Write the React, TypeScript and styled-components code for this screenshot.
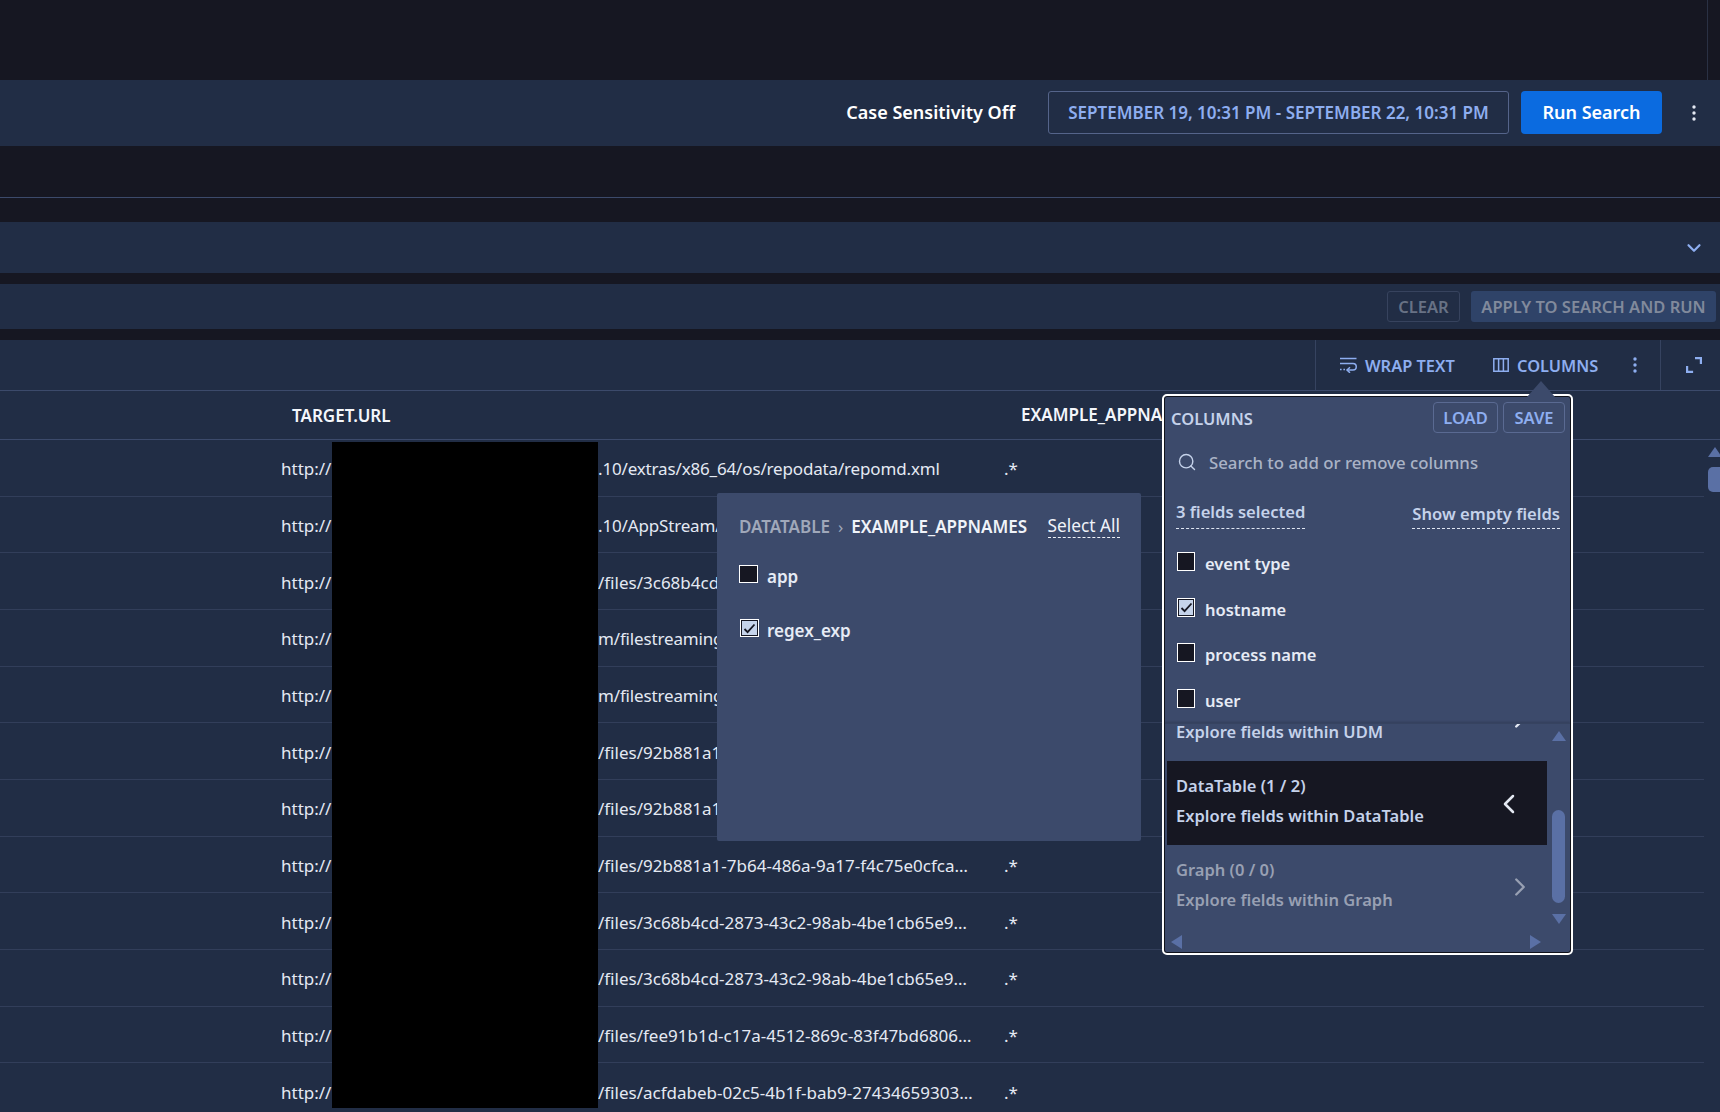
import React from "react";
import styled, { createGlobalStyle } from "styled-components";
import { ChevronDown, ChevronLeft, ChevronRight, Search } from "lucide-react";

const GlobalStyle = createGlobalStyle`
  html, body { margin: 0; padding: 0; background: #161722; }
  body { font-family: "Noto Sans", "Open Sans", sans-serif; overflow: hidden; }
  * { box-sizing: border-box; }
`;

const Page = styled.div`
  position: relative;
  width: 1720px;
  height: 1112px;
  overflow: hidden;
  background: #161722;
  color: #e4e9f3;
`;

const TopBand = styled.div`
  height: 80px;
  display: flex;
  justify-content: flex-end;
  padding-right: 12px;
`;
const ScrollEdge = styled.div`
  width: 1px;
  background: #2a3144;
`;

const Bar = styled.div<{ $h: number; $mt?: number; $pr?: number; $pb?: number }>`
  height: ${(p) => p.$h}px;
  margin-top: ${(p) => p.$mt ?? 0}px;
  padding-right: ${(p) => p.$pr ?? 16}px;
  padding-bottom: ${(p) => p.$pb ?? 0}px;
  background: #212d45;
  display: flex;
  align-items: center;
  justify-content: flex-end;
`;

const CaseLabel = styled.span`
  font-size: 18px;
  font-weight: 600;
  color: #fff;
  margin-right: 33px;
  padding-bottom: 1px;
  white-space: nowrap;
`;
const DateBox = styled.div`
  width: 461px;
  height: 43px;
  padding-bottom: 1px;
  border: 1px solid #55648a;
  border-radius: 3px;
  color: #8eaef0;
  font-size: 17px;
  font-weight: 600;
  display: flex;
  align-items: center;
  justify-content: center;
  white-space: nowrap;
`;
const RunButton = styled.button`
  width: 141px;
  height: 43px;
  margin: 0 22px 0 12px;
  padding: 0 0 1px;
  border: 0;
  border-radius: 4px;
  background: #0b6be0;
  color: #fff;
  font: 600 18px "Noto Sans", sans-serif;
`;
const IconBox = styled.span<{ $c?: string }>`
  width: 20px;
  height: 20px;
  display: inline-flex;
  align-items: center;
  justify-content: center;
  flex: none;
  color: ${(p) => p.$c ?? "#8eaef0"};
  & > svg { flex: none; }
`;

const Rule = styled.div`
  height: 1px;
  margin-top: 51px;
  background: #3c4a6b;
`;

const ClearButton = styled.button`
  width: 73px;
  height: 31px;
  border: 1px solid #37435e;
  border-radius: 3px;
  background: transparent;
  color: #687285;
  font: 600 16.5px "Noto Sans", sans-serif;
  padding: 0;
`;
const ApplyButton = styled.button`
  width: 245px;
  height: 31px;
  margin-left: 11px;
  border: 0;
  border-radius: 3px;
  background: #2f4368;
  color: #818a9c;
  font: 600 16.5px "Noto Sans", sans-serif;
  padding: 0;
  white-space: nowrap;
`;

const TableToolbar = styled.div`
  height: 51px;
  margin-top: 11px;
  background: #212d45;
  border-bottom: 1px solid #3c4a6b;
  display: flex;
  justify-content: flex-end;
`;
const ToolGroup = styled.div`
  width: 346px;
  padding-left: 24px;
  border-left: 1px solid #364360;
  border-right: 1px solid #364360;
  display: flex;
  align-items: center;
`;
const ToolButton = styled.div<{ $w: number }>`
  width: ${(p) => p.$w}px;
  display: flex;
  align-items: center;
  gap: 8px;
  color: #8eaef0;
  font-size: 16.4px;
  font-weight: 600;
  white-space: nowrap;
`;
const ExpandCell = styled.div`
  width: 59px;
  padding-left: 25px;
  display: flex;
  align-items: center;
`;

const Table = styled.div`
  background: #212d45;
  height: 722px;
  overflow: hidden;
`;
const HeaderRow = styled.div`
  height: 49px;
  border-bottom: 1px solid #3c4a6b;
  display: grid;
  grid-template-columns: 1021px 141px;
  align-items: center;
  font-size: 17px;
  font-weight: 600;
  color: #f4f6fb;
  white-space: nowrap;
`;
const HeaderCell = styled.div<{ $pl?: number; $mt?: number }>`
  padding-left: ${(p) => p.$pl ?? 0}px;
  margin-top: ${(p) => p.$mt ?? 0}px;
`;
const TableBody = styled.div`
  display: flex;
`;
const Rows = styled.div`
  width: 1704px;
`;
const Row = styled.div`
  height: 56.66px;
  padding-top: 2px;
  border-bottom: 1px solid #323e5a;
  display: grid;
  grid-template-columns: 1004px 1fr;
  align-items: center;
  font-size: 17px;
  color: #e4e9f3;
  white-space: nowrap;
`;
const UrlCell = styled.div`
  padding-left: 281px;
  display: flex;
  overflow: hidden;
`;
const Scheme = styled.span`
  width: 317px;
  flex: none;
`;
const Path = styled.span<{ $tight?: boolean }>`
  letter-spacing: ${(p) => (p.$tight ? "-0.16px" : "0")};
`;
const VScroll = styled.div`
  width: 16px;
  padding: 7px 0 0 4px;
  display: flex;
  flex-direction: column;
`;
const VThumb = styled.div`
  width: 12px;
  height: 25px;
  margin-top: 10px;
  border-radius: 5px 0 0 5px;
  background: #5a70a5;
`;
const Arrow = styled.span<{ $dir: "up" | "down" | "left" | "right"; $w: number; $h: number }>`
  display: block;
  flex: none;
  width: 0;
  height: 0;
  ${(p) =>
    p.$dir === "up"
      ? `border-left:${p.$w / 2}px solid transparent;border-right:${p.$w / 2}px solid transparent;border-bottom:${p.$h}px solid #5a70a5;`
      : p.$dir === "down"
      ? `border-left:${p.$w / 2}px solid transparent;border-right:${p.$w / 2}px solid transparent;border-top:${p.$h}px solid #5a70a5;`
      : p.$dir === "left"
      ? `border-top:${p.$h / 2}px solid transparent;border-bottom:${p.$h / 2}px solid transparent;border-right:${p.$w}px solid #5a70a5;`
      : `border-top:${p.$h / 2}px solid transparent;border-bottom:${p.$h / 2}px solid transparent;border-left:${p.$w}px solid #5a70a5;`}
`;

const Redaction = styled.div`
  position: absolute;
  left: 332px;
  top: 442px;
  width: 266px;
  height: 666px;
  background: #000;
`;

const TablePopover = styled.div`
  position: absolute;
  left: 717px;
  top: 493px;
  width: 424px;
  height: 348px;
  padding: 22px 21px 0 22px;
  background: #3c4a6b;
  border-radius: 2px;
`;
const CrumbRow = styled.div`
  display: flex;
  align-items: center;
  height: 22px;
  font-size: 17px;
  white-space: nowrap;
`;
const CrumbMuted = styled.span`
  color: #a0a8ba;
  font-weight: 600;
`;
const CrumbSep = styled.span`
  color: #a0a8ba;
  margin: 0 8px;
`;
const CrumbStrong = styled.span`
  color: #f0f3f9;
  font-weight: 600;
`;
const SelectAll = styled.span`
  margin-left: auto;
  color: #f0f3f9;
  border-bottom: 1px dashed #f0f3f9;
  line-height: 22px;
  font-size: 17.3px;
`;
const OptionList = styled.div`
  margin-top: 28px;
  display: flex;
  flex-direction: column;
  gap: 36px;
`;
const Option = styled.div<{ $nudge?: number }>`
  display: flex;
  height: 18px;
  gap: 9px;
  padding-left: ${(p) => p.$nudge ?? 0}px;
`;
const OptionLabel = styled.span<{ $shift?: number }>`
  margin-left: ${(p) => p.$shift ?? 0}px;
  font-size: 16.5px;
  font-weight: 600;
  line-height: 26px;
  color: #e6ebf5;
`;
const PopoverLabel = styled(OptionLabel)`
  font-size: 17px;
  line-height: 24px;
`;
const Check = styled.span<{ $on?: boolean; $w?: number; $h?: number }>`
  width: ${(p) => p.$w ?? 18}px;
  height: ${(p) => p.$h ?? 19}px;
  flex: none;
  border: 1px solid #fff;
  background: ${(p) => (p.$on ? "#c5d3ea" : "#161722")};
  box-shadow: ${(p) => (p.$on ? "inset 0 0 0 1px #161722" : "none")};
  display: inline-flex;
  align-items: center;
  justify-content: center;
`;

const ColumnsPanel = styled.div`
  position: absolute;
  left: 1162px;
  top: 394px;
  width: 411px;
  height: 561px;
  padding: 1px;
  border: 2px solid #fff;
  border-radius: 5px;
  background: #3c4a6b;
  box-shadow: inset 0 0 0 1px #10121a;
`;
const PanelCaret = styled.span`
  position: absolute;
  left: 363px;
  top: -15px;
  width: 0;
  height: 0;
  border-left: 14px solid transparent;
  border-right: 14px solid transparent;
  border-bottom: 16px solid #3c4a6b;
`;
const PanelHeader = styled.div`
  height: 40px;
  padding: 5px 5px 0 6px;
  display: flex;
  align-items: flex-start;
  gap: 5px;
`;
const PanelTitle = styled.span`
  margin-right: auto;
  font-size: 16.5px;
  font-weight: 600;
  line-height: 34px;
  color: #c5d2ea;
`;
const GhostButton = styled.button<{ $w: number }>`
  width: ${(p) => p.$w}px;
  height: 31px;
  padding: 0;
  border: 1px solid #5a6a92;
  border-radius: 4px;
  background: transparent;
  color: #8eaef0;
  font: 600 16.5px "Noto Sans", sans-serif;
`;
const SearchRow = styled.div`
  height: 52px;
  padding: 0 0 2px 12px;
  display: flex;
  align-items: center;
  gap: 12px;
  font-size: 16.8px;
  font-weight: 500;
  color: #aab3c6;
`;
const FieldsRow = styled.div`
  height: 40px;
  padding: 0 10px 0 11px;
  display: flex;
  align-items: flex-end;
  justify-content: space-between;
  font-size: 16.6px;
  font-weight: 600;
  color: #c5d2ea;
`;
const FieldsLink = styled.span<{ $pb: number }>`
  line-height: 22px;
  padding-bottom: ${(p) => p.$pb}px;
  border-bottom: 1px dashed #dfe6f3;
`;
const ColumnList = styled.div`
  height: 194px;
  padding: 23px 0 0 12px;
  overflow: hidden;
`;
const ColumnItem = styled.div`
  height: 45.67px;
  display: flex;
  gap: 10px;
`;
const ColumnLabel = styled(OptionLabel)`
  line-height: 24px;
`;
const ExploreArea = styled.div`
  height: 229px;
  border-top: 1px solid #364360;
  box-shadow: 0 -1px 2px rgba(22, 23, 34, 0.25);
  display: grid;
  grid-template-columns: 385px 1fr;
  grid-template-rows: 207px 22px;
  overflow: hidden;
`;
const ExploreList = styled.div`
  overflow: hidden;
`;
const ExploreItem = styled.div<{ $active?: boolean; $muted?: boolean; $h?: number; $pt: number; $pr: number }>`
  height: ${(p) => p.$h ?? 84}px;
  width: 380px;
  margin-left: 2px;
  padding: ${(p) => p.$pt}px ${(p) => p.$pr}px 0 9px;
  display: flex;
  justify-content: space-between;
  overflow: hidden;
  background: ${(p) => (p.$active ? "#161722" : "transparent")};
  color: ${(p) => (p.$muted ? "#98a0b3" : "#c5d2ea")};
  font-size: 16.5px;
  font-weight: 600;
  line-height: 30px;
`;
const ExploreText = styled.div<{ $mt?: number }>`
  margin-top: ${(p) => p.$mt ?? 0}px;
  white-space: nowrap;
`;
const ExploreChevron = styled.div<{ $mt: number }>`
  margin-top: ${(p) => p.$mt}px;
  height: 20px;
`;
const ScrollColumn = styled.div`
  padding-top: 7px;
  display: flex;
  flex-direction: column;
  align-items: center;
  width: 17px;
`;
const ScrollThumb = styled.div`
  width: 13px;
  height: 93px;
  margin: 69px 0 11px;
  border-radius: 7px;
  background: #5a70a5;
`;
const HScroll = styled.div`
  grid-column: 1 / 3;
  width: 376px;
  padding: 0 0 0 6px;
  display: flex;
  align-items: center;
  justify-content: space-between;
`;

const Dots = () => (
  <svg width="4" height="16" viewBox="0 0 4 16" fill="currentColor">
    <circle cx="2" cy="2" r="1.7" />
    <circle cx="2" cy="8" r="1.7" />
    <circle cx="2" cy="14" r="1.7" />
  </svg>
);
const WrapIcon = () => (
  <svg width="17" height="16" viewBox="0 0 17 16" fill="none" stroke="currentColor" strokeWidth="1.5" style={{ flex: "none" }}>
    <path d="M0 1.5h16.5" />
    <path d="M0 6.5h13a3 3 0 0 1 0 6.5H7.5" />
    <path d="M10 10.2 7 13l3 2.8" />
    <path d="M0 12.5h1.6M3.4 12.5h1.6" />
  </svg>
);
const ColumnsIcon = () => (
  <svg width="16" height="14" viewBox="0 0 16 14" fill="none" stroke="currentColor" strokeWidth="1.5" style={{ flex: "none" }}>
    <path d="M.8.8h14.4v12.4H.8zM5.6.8v12.4M10.4.8v12.4" />
  </svg>
);
const ExpandIcon = () => (
  <svg width="16" height="16" viewBox="0 0 16 16" fill="none" stroke="#8eaef0" strokeWidth="2.2">
    <path d="M9 1.1h5.9v6M1.1 9v5.9h6" />
  </svg>
);
const Tick = () => (
  <svg width="13" height="11" viewBox="0 0 13 11" fill="none" stroke="#161722" strokeWidth="1.8">
    <path d="M1.5 6 4.6 9.2 11.5 1.5" />
  </svg>
);

const urls: [string, boolean][] = [
  [".10/extras/x86_64/os/repodata/repomd.xml", true],
  [".10/AppStream/", false],
  ["/files/3c68b4cd", false],
  ["m/filestreaming", false],
  ["m/filestreaming", false],
  ["/files/92b881a1", false],
  ["/files/92b881a1", false],
  ["/files/92b881a1-7b64-486a-9a17-f4c75e0cfca…", true],
  ["/files/3c68b4cd-2873-43c2-98ab-4be1cb65e9…", true],
  ["/files/3c68b4cd-2873-43c2-98ab-4be1cb65e9…", true],
  ["/files/fee91b1d-c17a-4512-869c-83f47bd6806…", true],
  ["/files/acfdabeb-02c5-4b1f-bab9-27434659303…", true],
];

export default function App() {
  return (
    <Page>
      <GlobalStyle />
      <TopBand>
        <ScrollEdge />
      </TopBand>
      <Bar $h={66} $pb={1}>
        <CaseLabel>Case Sensitivity Off</CaseLabel>
        <DateBox>SEPTEMBER 19, 10:31 PM - SEPTEMBER 22, 10:31 PM</DateBox>
        <RunButton>Run Search</RunButton>
        <IconBox $c="#e4e9f3">
          <Dots />
        </IconBox>
      </Bar>
      <Rule />
      <Bar $h={51} $mt={24}>
        <IconBox>
          <ChevronDown size={22} strokeWidth={2.4} />
        </IconBox>
      </Bar>
      <Bar $h={45} $mt={11} $pr={4}>
        <ClearButton>CLEAR</ClearButton>
        <ApplyButton>APPLY TO SEARCH AND RUN</ApplyButton>
      </Bar>
      <TableToolbar>
        <ToolGroup>
          <ToolButton $w={153}>
            <WrapIcon />
            WRAP TEXT
          </ToolButton>
          <ToolButton $w={132}>
            <ColumnsIcon />
            COLUMNS
          </ToolButton>
          <IconBox>
            <Dots />
          </IconBox>
        </ToolGroup>
        <ExpandCell>
          <ExpandIcon />
        </ExpandCell>
      </TableToolbar>
      <Table>
        <HeaderRow>
          <HeaderCell $pl={292}>TARGET.URL</HeaderCell>
          <HeaderCell $mt={-2}>EXAMPLE_APPNA</HeaderCell>
        </HeaderRow>
        <TableBody>
          <Rows>
            {urls.map(([path, star], i) => (
              <Row key={i}>
                <UrlCell>
                  <Scheme>http://</Scheme>
                  <Path $tight={!path.startsWith("/")}>{path}</Path>
                </UrlCell>
                <span>{star ? ".*" : ""}</span>
              </Row>
            ))}
          </Rows>
          <VScroll>
            <Arrow $dir="up" $w={14} $h={10} />
            <VThumb />
          </VScroll>
        </TableBody>
      </Table>

      <Redaction />

      <TablePopover>
        <CrumbRow>
          <CrumbMuted>DATATABLE</CrumbMuted>
          <CrumbSep>›</CrumbSep>
          <CrumbStrong>EXAMPLE_APPNAMES</CrumbStrong>
          <SelectAll>Select All</SelectAll>
        </CrumbRow>
        <OptionList>
          <Option>
            <Check $w={19} $h={18} />
            <PopoverLabel>app</PopoverLabel>
          </Option>
          <Option $nudge={1}>
            <Check $on $w={19} $h={18}>
              <Tick />
            </Check>
            <PopoverLabel $shift={-1}>regex_exp</PopoverLabel>
          </Option>
        </OptionList>
      </TablePopover>

      <ColumnsPanel>
        <PanelCaret />
        <PanelHeader>
          <PanelTitle>COLUMNS</PanelTitle>
          <GhostButton $w={65}>LOAD</GhostButton>
          <GhostButton $w={62}>SAVE</GhostButton>
        </PanelHeader>
        <SearchRow>
          <Search size={20} strokeWidth={1.7} color="#c5d2ea" />
          Search to add or remove columns
        </SearchRow>
        <FieldsRow>
          <FieldsLink $pb={5}>3 fields selected</FieldsLink>
          <FieldsLink $pb={3}>Show empty fields</FieldsLink>
        </FieldsRow>
        <ColumnList>
          <ColumnItem>
            <Check />
            <ColumnLabel>event type</ColumnLabel>
          </ColumnItem>
          <ColumnItem>
            <Check $on>
              <Tick />
            </Check>
            <ColumnLabel>hostname</ColumnLabel>
          </ColumnItem>
          <ColumnItem>
            <Check />
            <ColumnLabel>process name</ColumnLabel>
          </ColumnItem>
          <ColumnItem>
            <Check />
            <ColumnLabel>user</ColumnLabel>
          </ColumnItem>
        </ColumnList>
        <ExploreArea>
          <ExploreList>
            <ExploreItem $h={37} $pt={0} $pr={17}>
              <ExploreText $mt={-7}>Explore fields within UDM</ExploreText>
              <ExploreChevron $mt={-15}>
                <IconBox $c="#e4e9f3">
                  <ChevronRight size={30} strokeWidth={1.9} />
                </IconBox>
              </ExploreChevron>
            </ExploreItem>
            <ExploreItem $active $pt={10} $pr={28}>
              <ExploreText>
                DataTable (1 / 2)
                <br />
                Explore fields within DataTable
              </ExploreText>
              <ExploreChevron $mt={23}>
                <IconBox $c="#e4e9f3">
                  <ChevronLeft size={32} strokeWidth={1.9} />
                </IconBox>
              </ExploreChevron>
            </ExploreItem>
            <ExploreItem $muted $pt={10} $pr={17}>
              <ExploreText>
                Graph (0 / 0)
                <br />
                Explore fields within Graph
              </ExploreText>
              <ExploreChevron $mt={22}>
                <IconBox $c="#98a0b3">
                  <ChevronRight size={30} strokeWidth={1.9} />
                </IconBox>
              </ExploreChevron>
            </ExploreItem>
          </ExploreList>
          <ScrollColumn>
            <Arrow $dir="up" $w={14} $h={10} />
            <ScrollThumb />
            <Arrow $dir="down" $w={14} $h={10} />
          </ScrollColumn>
          <HScroll>
            <Arrow $dir="left" $w={11} $h={14} />
            <Arrow $dir="right" $w={11} $h={14} />
          </HScroll>
        </ExploreArea>
      </ColumnsPanel>
    </Page>
  );
}
